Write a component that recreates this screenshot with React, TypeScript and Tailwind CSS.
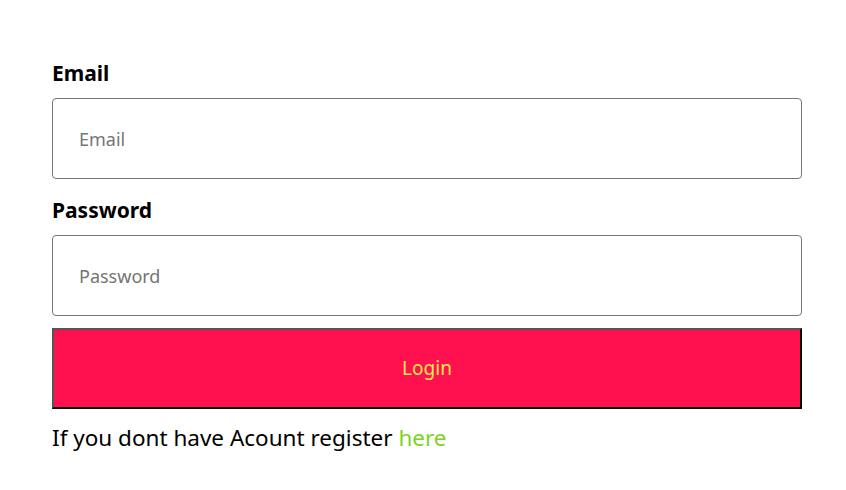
const inputClass =
	'h-[81px] w-full rounded-[4px] border border-[#767676] bg-white px-[26px] text-[18px] text-black outline-none placeholder:text-[#757575]';

const labelClass = 'mt-[17px] mb-[11px] block text-[21px] font-bold leading-[28px] text-black';

const App = () => {
	return (
		<div className="min-h-[490px] bg-white font-['Noto_Sans',sans-serif]">
			<form className="ml-[52px] flex w-[750px] flex-col pt-[42px]">
				<label className={labelClass}>Email</label>
				<input type="email" placeholder="Email" className={inputClass} />
				<label className={labelClass}>Password</label>
				<input type="password" placeholder="Password" className={inputClass} />
				<button
					type="button"
					className="mt-[12px] h-[81px] w-full border-2 border-t-[#555555] border-l-[#555555] border-r-black border-b-black bg-[#ff1150] text-[19px] text-[#f7e94a]"
				>
					Login
				</button>
				<p className="mt-[14px] text-[22.5px] leading-[30px] text-black">
					If you dont have Acount register <a className="text-[#7ed321]">here</a>
				</p>
			</form>
		</div>
	);
};

export default App;
